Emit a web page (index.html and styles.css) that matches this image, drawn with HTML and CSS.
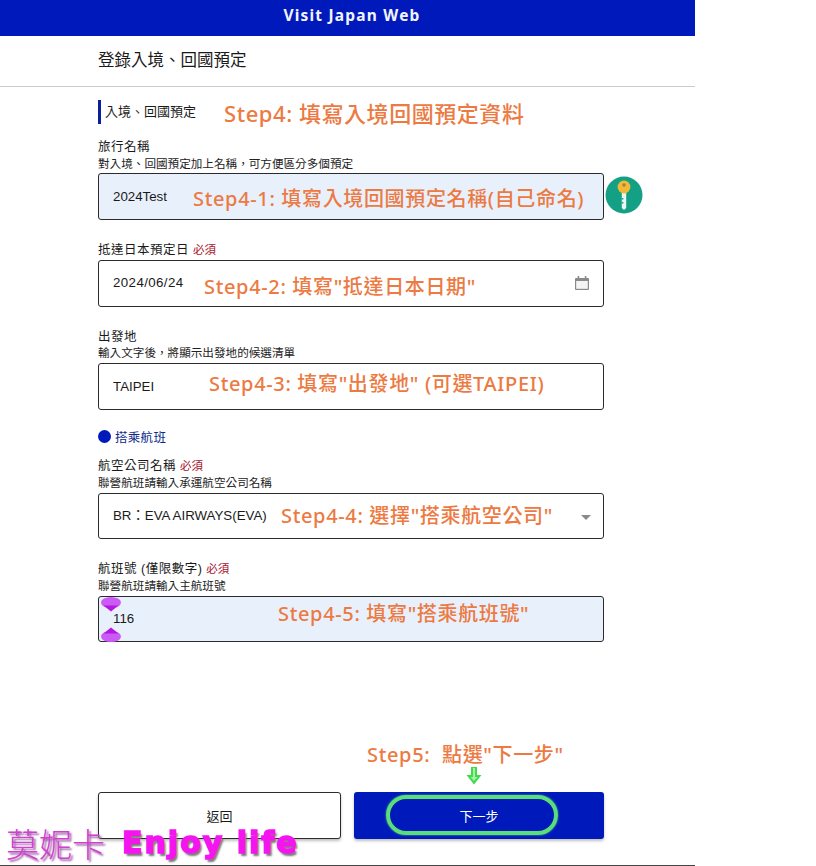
FILE: index.html
```html
<!DOCTYPE html>
<html lang="zh-Hant">
<head>
<meta charset="utf-8">
<title>Visit Japan Web</title>
<link rel="stylesheet" href="styles.css">
</head>
<body>
<div class="page">
  <header class="topbar">Visit Japan Web</header>
  <div class="pagetitle"><h1>登錄入境、回國預定</h1></div>
  <main class="form">
    <div class="section-head">
      <h2>入境、回國預定</h2>
      <span class="note note-main">Step4: 填寫入境回國預定資料</span>
    </div>

    <div class="field field-first">
      <div class="label">旅行名稱</div>
      <div class="help">對入境、回國預定加上名稱，可方便區分多個預定</div>
      <div class="box filled">
        <span class="value">2024Test</span>
        <span class="note note-1">Step4-1: 填寫入境回國預定名稱(自己命名)</span>
        <svg class="key" viewBox="0 0 38 38" width="38" height="38">
          <circle cx="19" cy="19" r="18.5" fill="#14a085"/>
          <path d="M16.8 15h4.4v17l-2.2 2-2.2-2z" fill="#eef6f2"/>
          <path d="M16.8 22h1.6v1.4h-1.6zM16.8 26h1.6v1.4h-1.6z" fill="#14a085"/>
          <circle cx="19" cy="11" r="6.4" fill="#f0b93a"/>
          <circle cx="19" cy="9" r="1.7" fill="#a5842c"/>
        </svg>
      </div>
    </div>

    <div class="field field-2">
      <div class="label">抵達日本預定日 <em>必須</em></div>
      <div class="box box-date">
        <span class="value value-date">2024/06/24</span>
        <span class="note note-2">Step4-2: 填寫"抵達日本日期"</span>
        <svg class="cal" viewBox="0 0 14 15" width="14" height="15">
          <path d="M1 3h12a1 1 0 0 1 1 1v10a1 1 0 0 1-1 1H1a1 1 0 0 1-1-1V4a1 1 0 0 1 1-1z" fill="#8a8a8a"/>
          <rect x="1.200" y="6" width="11.600" height="7.800" fill="#f4f4f4"/>
          <rect x="2.600" y="1" width="1.600" height="3" fill="#8a8a8a"/>
          <rect x="9.800" y="1" width="1.600" height="3" fill="#8a8a8a"/>
        </svg>
      </div>
    </div>

    <div class="field field-3">
      <div class="label">出發地</div>
      <div class="help">輸入文字後，將顯示出發地的候選清單</div>
      <div class="box">
        <span class="value">TAIPEI</span>
        <span class="note note-3">Step4-3: 填寫"出發地" (可選TAIPEI)</span>
      </div>
    </div>

    <div class="subhead"><span class="dot"></span>搭乘航班</div>

    <div class="field field-4">
      <div class="label">航空公司名稱 <em>必須</em></div>
      <div class="help">聯營航班請輸入承運航空公司名稱</div>
      <div class="box">
        <span class="value">BR：EVA AIRWAYS(EVA)</span>
        <span class="note note-4">Step4-4: 選擇"搭乘航空公司"</span>
        <span class="caret"></span>
      </div>
    </div>

    <div class="field field-5">
      <div class="label">航班號 (僅限數字) <em>必須</em></div>
      <div class="help">聯營航班請輸入主航班號</div>
      <div class="box filled">
        <span class="value">116</span>
        <span class="note note-5">Step4-5: 填寫"搭乘航班號"</span>
        <svg class="gem gem-top" viewBox="0 0 20 15" width="20" height="15">
          <ellipse cx="10" cy="5.500" rx="10" ry="5.500" fill="#cc5bf5"/>
          <path d="M2.500 8.500h15L10 14.500z" fill="#b416e6"/>
        </svg>
        <svg class="gem gem-bottom" viewBox="0 0 20 15" width="20" height="15">
          <ellipse cx="10" cy="9.500" rx="10" ry="5.500" fill="#cc5bf5"/>
          <path d="M2.500 6.500h15L10 .5z" fill="#b416e6"/>
        </svg>
      </div>
    </div>

    <div class="actions">
      <div class="note note-next">Step5:&nbsp; 點選"下一步"</div>
      <svg class="arrow" viewBox="0 0 16 18" width="16" height="18">
        <path d="M5 0h6v8h4.500L8 17.500.5 8H5z" fill="#3fdc4a"/>
        <path d="M7 1h2v9h2.500L8 14 4.500 10H7z" fill="#a8f0a8"/>
      </svg>
      <button class="btn btn-back" type="button">返回</button>
      <button class="btn btn-next" type="button"><span class="ring"></span>下一步</button>
    </div>
  </main>
</div>
<div class="watermark"><span class="wm-cjk">莫妮卡</span><span class="wm-latin">Enjoy life</span></div>
</body>
</html>
```
FILE: styles.css
```css
* { box-sizing: border-box; }
html, body { margin: 0; padding: 0; }
body {
  background: #fff;
  color: #1a1a1a;
  font-family: "Liberation Sans", "Noto Sans CJK TC", sans-serif;
  position: relative;
}
.page {
  width: 695px;
  height: 866px;
  border-bottom: 1px solid #444;
}
.topbar {
  height: 36px;
  padding-left: 9px;
  background: #0019bb;
  color: #f2f4ff;
  font-family: "Noto Sans", sans-serif;
  font-weight: 700;
  font-size: 15.500px;
  letter-spacing: 1.200px;
  line-height: 31px;
  text-align: center;
}
.pagetitle {
  height: 51px;
  padding: 14px 0 0 98px;
  border-bottom: 1px solid #ccc;
}
.pagetitle h1 {
  margin: 0;
  font-size: 16.500px;
  font-weight: 400;
  line-height: 21px;
}
.form {
  position: relative;
  width: 506px;
  margin-left: 98px;
  padding-top: 13px;
}
.section-head {
  position: relative;
  height: 24px;
  border-left: 3px solid #0b1f9c;
  padding-left: 4px;
}
.section-head h2 {
  margin: 0;
  font-size: 13px;
  font-weight: 400;
  line-height: 24px;
}
.label {
  font-size: 12.500px;
  line-height: 16px;
  letter-spacing: .5px;
}
.label em {
  font-style: normal;
  color: #a8112e;
  letter-spacing: 0;
  font-size: 11.500px;
}
.help {
  margin-top: 1px;
  font-size: 11.600px;
  line-height: 15px;
  color: #222;
}
.box {
  position: relative;
  height: 46px;
  margin-top: 3px;
  padding-left: 14px;
  border: 1px solid #2b2b2b;
  border-radius: 3px;
  background: #fff;
  display: flex;
  align-items: center;
}
.box.filled { background: #e8f0fc; }
.box-date { padding-bottom: 2px; }
.value { font-size: 13.300px; line-height: 16px; }
.value-date { letter-spacing: .4px; }
.field-first { margin-top: 15px; }
.field-first .box { margin-top: 2px; height: 47px; }
.field-2 { margin-top: 22px; }
.field-2 .box { margin-top: 2px; height: 47px; }
.field-3 { margin-top: 22px; }
.field-3 .help { margin-top: 0; }
.field-3 .box { height: 47px; }
.field-4 { margin-top: 14px; }
.field-5 { margin-top: 22px; }
.subhead {
  margin-top: 18px;
  height: 16px;
  display: flex;
  align-items: center;
  color: #102a8c;
  font-size: 12.500px;
  letter-spacing: .3px;
}
.dot {
  width: 13px;
  height: 13px;
  border-radius: 50%;
  background: #0019bb;
  margin-right: 4px;
}
.note {
  position: absolute;
  white-space: nowrap;
  color: #ec7a42;
  font-family: "Noto Sans", "Noto Sans CJK TC", sans-serif;
  font-weight: 500;
  font-size: 20px;
  line-height: 28px;
  letter-spacing: .65px;
}
.note-main { left: 123px; top: -1px; font-size: 22px; letter-spacing: .55px; }
.note-1 { left: 94px; top: 11px; }
.note-2 { left: 105px; top: 12px; }
.note-3 { left: 110px; top: 6px; }
.note-4 { left: 182px; top: 8px; }
.note-5 { left: 179px; top: 3px; }
.key { position: absolute; left: 506px; top: 2px; }
.cal { position: absolute; right: 14px; top: 14px; }
.caret {
  position: absolute;
  right: 12px;
  top: 21px;
  border-left: 5px solid transparent;
  border-right: 5px solid transparent;
  border-top: 5px solid #8a8a8a;
}
.gem { position: absolute; left: 2px; }
.gem-top { top: 0; }
.gem-bottom { bottom: -1px; }
.actions {
  position: relative;
  margin-top: 150px;
  display: flex;
  gap: 13px;
}
.note-next { left: 269px; top: -51px; }
.arrow { position: absolute; left: 368px; top: -25px; }
.btn {
  position: relative;
  height: 47px;
  border-radius: 3px;
  font-family: inherit;
  font-size: 13px;
  padding: 0;
}
.btn-back {
  width: 243px;
  background: #fff;
  border: 1px solid #2b2b2b;
  color: #1a1a1a;
  box-shadow: 0 2px 3px rgba(0,0,0,.25);
}
.btn-next {
  width: 250px;
  background: #0019bb;
  border: 0;
  color: #fff;
  box-shadow: 0 2px 3px rgba(0,0,0,.25);
}
.ring {
  position: absolute;
  left: 32px;
  top: 3px;
  width: 172px;
  height: 40px;
  border: 4px solid #5ade78;
  border-radius: 20px;
  box-shadow: 0 0 2px #5ade78;
}
.watermark {
  position: absolute;
  left: 6px;
  top: 822px;
  display: flex;
  align-items: center;
  white-space: nowrap;
}
.wm-cjk {
  font-family: "Noto Sans CJK TC", serif;
  font-weight: 300;
  font-size: 33px;
  line-height: 42px;
  color: #d040d0;
  text-shadow: 2px 2px 2px #9a5aa0;
}
.wm-latin {
  margin-left: 17px;
  font-family: "DejaVu Sans", sans-serif;
  font-weight: 700;
  font-size: 30px;
  line-height: 42px;
  letter-spacing: 2px;
  color: #f414f0;
  -webkit-text-stroke: 1.500px #f414f0;
  text-shadow: 2px 3px 2px #777;
}
```
